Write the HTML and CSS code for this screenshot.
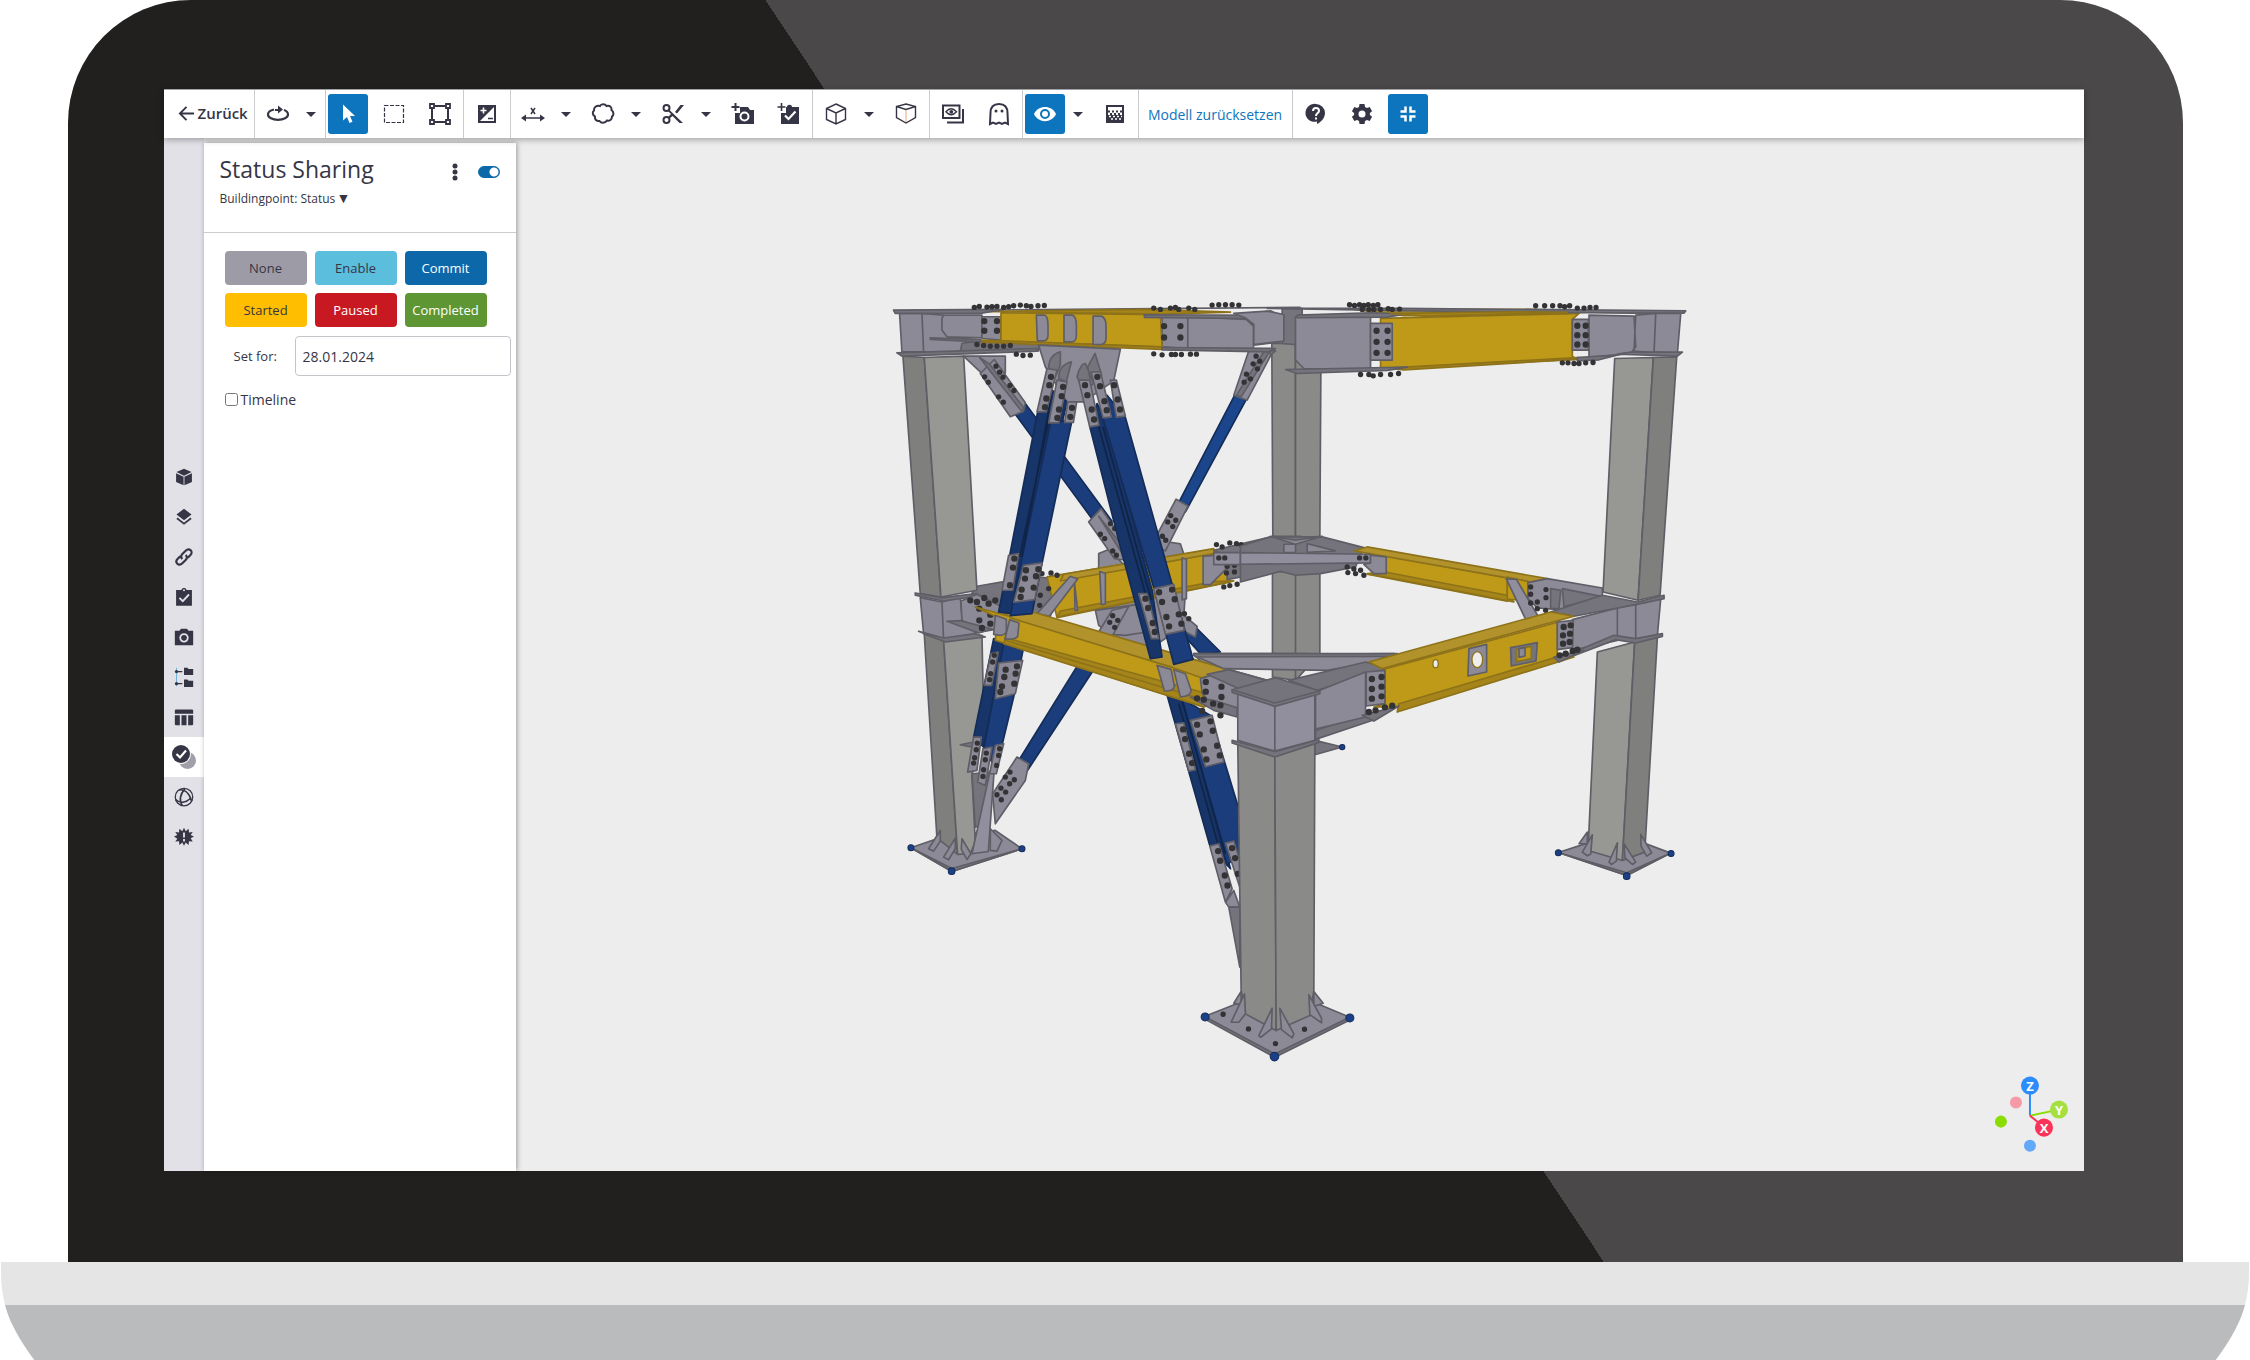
FILE: index.html
```html
<!DOCTYPE html>
<html lang="de">
<head>
    <meta charset="UTF-8">
    <meta name="viewport" content="width=device-width, initial-scale=1.0">
    <title>Status Sharing</title>
    <link rel="stylesheet" href="styles.css">
</head>
<body>
    <div class="lid">
        <div class="screen">
            <header class="toolbar">
                <div class="group">
                    <button class="back"><svg viewBox="0 0 18 18"><path class="line" d="M17 9H2M9 2L2 9l7 7"/></svg>Zurück</button>
                </div>
                <div class="group flush">
                    <button class="tool" aria-label="Orbit"><svg viewBox="0 0 24 24"><path d="M8 7.500C4 8.300 2 10 2 12.500c0 3.200 4.500 5.300 10 5.300s10-2.100 10-5.300c0-2-1.500-3.700-4-4.500M9 8h5" fill="none" stroke="#363545" stroke-width="2.200"/><path d="M12 3.500l5 4-5 4z"/></svg></button>
                    <button class="caret" aria-label="Orbit options"></button>
                </div>
                <div class="group">
                    <button class="tool active" aria-label="Select"><svg viewBox="0 0 24 24"><path d="M7 2.500v16l4-3.500 2.500 6 3-1.300L14 14h5z"/></svg></button>
                    <button class="tool" aria-label="Area"><svg viewBox="0 0 24 24"><path d="M2.500 3.500h19v17h-19z" fill="none" stroke="#363545" stroke-width="1.200" stroke-dasharray="4 1.500"/></svg></button>
                    <button class="tool" aria-label="Polygon"><svg viewBox="0 0 24 24"><path class="line" d="M4 4h16v16H4z"/><path d="M2 2h4v4H2zM18 2h4v4h-4zM2 18h4v4H2zM18 18h4v4h-4z" fill="#fff" stroke="#363545" stroke-width="1.800"/></svg></button>
                </div>
                <div class="group flush">
                    <button class="tool" aria-label="Contrast"><svg viewBox="0 0 24 24"><path d="M4 4h16v16H4z" fill="#fff" stroke="#363545" stroke-width="2"/><path d="M3 3h18L3 21z"/><path d="M8.500 5.500v6M5.500 8.500h6" stroke="#fff" stroke-width="1.600"/><path d="M13 16.500h5" stroke="#363545" stroke-width="1.500"/></svg></button>
                </div>
                <div class="group">
                    <button class="tool" aria-label="Measure"><svg viewBox="0 0 24 24"><path d="M4 16h16M10 6l4 6M14 6l-4 6" fill="none" stroke="#363545" stroke-width="1.500"/><path d="M0 16l5-3.500v7zM24 16l-5-3.500v7z"/></svg></button>
                    <button class="caret" aria-label="Measure options"></button>
                    <button class="tool" aria-label="Markup"><svg viewBox="0 0 24 24"><path class="line" d="M9 4c1-2.500 5-2.500 6.500 0 3-1 5.500 1 5 4 2.500 2 2.500 5 .500 6.500 0 3-2.500 5-5 4-2 3-6 3-7.500.500-3 .500-5-1.500-4.500-4.500C1.500 13 1 10 3 8.500 2.500 5.500 5.500 3 9 4z"/></svg></button>
                    <button class="caret" aria-label="Markup options"></button>
                    <button class="tool" aria-label="Cut"><svg viewBox="0 0 24 24"><path d="M8 7.500L22 21h-3.500L11.500 14 8 17l-1.500-1.500 3.500-3.500-3.500-3.500zM14 10l5.500-7H23l-7 8.500z"/><circle class="line" cx="5.500" cy="6" r="3"/><circle class="line" cx="5.500" cy="18" r="3"/></svg></button>
                    <button class="caret" aria-label="Cut options"></button>
                    <button class="tool" aria-label="Add view"><svg viewBox="0 0 24 24"><path d="M9 5h8l2 3h4v14H4V11h5z"/><path d="M4.500 1v8M.500 5h8" stroke="#363545" stroke-width="2"/><circle cx="13.500" cy="14.500" r="4" fill="none" stroke="#fff" stroke-width="2"/></svg></button>
                    <button class="tool" aria-label="Add task"><svg viewBox="0 0 24 24"><path d="M10 5c0-3 5-3 5 0h7v17H4v-11h5V5z"/><path d="M4.500 1v8M.500 5h8" stroke="#363545" stroke-width="1.600"/><path d="M8 13.500l3.500 3.500 7-7.500" fill="none" stroke="#fff" stroke-width="2.200"/></svg></button>
                </div>
                <div class="group">
                    <button class="tool" aria-label="View cube"><svg viewBox="0 0 24 24"><path class="thin" d="M12 2l9.500 4.500v11L12 22l-9.500-4.500v-11zM2.500 6.500L12 11l9.500-4.500M12 11v11"/></svg></button>
                    <button class="caret" aria-label="View options"></button>
                    <button class="tool" aria-label="Projection"><svg viewBox="0 0 24 24"><path class="thin" d="M12 2l9.500 2.500v11L12 21l-9.500-5.500v-11zM2.500 4.500L12 7.500l9.500-3"/><path d="M12 8v12" stroke="#e9a67c"/></svg></button>
                </div>
                <div class="group flush">
                    <button class="tool" aria-label="Views"><svg viewBox="0 0 24 24"><path class="line" d="M2 3.500h16.500V16H2zM22 7v13.500H6"/><path class="thin" d="M5 9.800q5-6 10.500 0q-5.500 6-10.500 0z"/><circle cx="10.300" cy="9.800" r="1.900"/></svg></button>
                    <button class="tool" aria-label="Ghost"><svg viewBox="0 0 24 24"><path class="line" d="M3 22l.500-11C3.500 5 7 2 12 2s8.500 3 8.500 9L21 22l-3-1.500-3 1.500-3-1.500L9 22l-3-1.500z"/><circle cx="9" cy="9" r="1.500"/><circle cx="15" cy="9" r="1.500"/></svg></button>
                </div>
                <div class="group">
                    <button class="tool active" aria-label="Visibility"><svg viewBox="0 0 24 24"><path d="M1 12C5 2.500 19 2.500 23 12 19 21.500 5 21.500 1 12z"/><circle cx="12" cy="12" r="4" fill="none" stroke="#0d75bd" stroke-width="2"/></svg></button>
                    <button class="caret" aria-label="Visibility options"></button>
                    <button class="tool" aria-label="Transparency"><svg viewBox="0 0 24 24"><path class="line" d="M4 4h16v16H4z"/><path d="M4 13h16v7H4z"/><path d="M5 9.500h14M7 12h12" stroke="#363545" stroke-width="2" stroke-dasharray="2 2"/><path d="M6 14.500h13M8 17h10" stroke="#fff" stroke-width="1.600" stroke-dasharray="2 2"/></svg></button>
                </div>
                <div class="group">
                    <button class="reset">Modell zurücksetzen</button>
                </div>
                <div class="group last">
                    <button class="tool" aria-label="Help"><svg viewBox="0 0 24 24"><path d="M12 2a9 9 0 0 1 9 9c0 5-4 9-8 11v-2.500A9 9 0 1 1 12 2z"/><path d="M9 9c0-4 6-4 6 0 0 2-3 2.300-3 5M12 15.500v2" fill="none" stroke="#fff" stroke-width="2"/></svg></button>
                    <button class="tool" aria-label="Settings"><svg viewBox="0 0 24 24"><path d="M9.500 2h5l.500 3 2 1 2.700-1 2.400 4.200-2.200 1.800v2l2.200 1.800-2.400 4.200-2.700-1-2 1-.500 3h-5L9 19l-2-1-2.700 1-2.400-4.200L4.100 13v-2L1.900 9.200 4.300 5 7 6l2-1z"/><circle cx="12" cy="12" r="3.500" fill="#fff"/></svg></button>
                    <button class="tool active" aria-label="Collapse"><svg viewBox="0 0 24 24"><path d="M4.500 9.500h5v-5M19.500 9.500h-5v-5M4.500 14.500h5v5M19.500 14.500h-5v5" fill="none" stroke="#fff" stroke-width="2.500"/></svg></button>
                </div>
            </header>

            <main class="workspace">
                <nav class="rail">
                    <a href="#models" aria-label="Models"><svg viewBox="0 0 24 24"><path d="M12 2l9 4-9 4.500L3 6zM2.500 7.500l9 4.200V22l-9-4zM21.500 7.500l-9 4.200V22l9-4z"/></svg></a>
                    <a href="#layers" aria-label="Layers"><svg viewBox="0 0 24 24"><path d="M12 2l9 7-9 7-9-7z"/><path class="line" d="M3.500 13.500L12 20l8.500-6.500"/></svg></a>
                    <a href="#links" aria-label="Links"><svg viewBox="0 0 24 24"><path d="M10 14.500c-2-2-2-4 0-6l4-4c2-2 4.500-2 6-.500s1.500 4-.500 6l-3 3M14 9.500c2 2 2 4 0 6l-4 4c-2 2-4.500 2-6 .500s-1.500-4 .500-6l3-3" fill="none" stroke="#363545" stroke-width="2.600"/></svg></a>
                    <a href="#tasks" aria-label="Tasks"><svg viewBox="0 0 24 24"><path d="M9 3.500c.500-3 5.500-3 6 0h6.500v19h-19v-19z"/><circle cx="12" cy="4" r="1.200" fill="#e1e1e7"/><path d="M6.500 13l4 4 7.500-8" fill="none" stroke="#e1e1e7" stroke-width="2.200"/></svg></a>
                    <a href="#views" aria-label="Views"><svg viewBox="0 0 24 24"><path d="M8.500 2h7l2 2.500H23V22H1V4.500h5.500z"/><circle cx="12" cy="13" r="4.500" fill="none" stroke="#e1e1e7" stroke-width="2.200"/></svg></a>
                    <a href="#tree" aria-label="Structure"><svg viewBox="0 0 24 24"><path d="M12 1h4l1.500 1.500H23V9.500H12zM12 15h4l1.500 1.500H23V24H12z"/><path d="M3 1v22" stroke="#5aa9dd"/><path d="M3 5.500h7M3 20h7" stroke="#363545" stroke-width="1.500"/><circle cx="3" cy="5.500" r="2"/><circle cx="3" cy="20" r="2"/></svg></a>
                    <a href="#data" aria-label="Data table"><svg viewBox="0 0 24 24"><path d="M2 3h20l1 1v4H1V4zM1 10h6v12H2l-1-1zM9 10h6v12H9zM17 10h6v11l-1 1h-5z"/></svg></a>
                    <a class="current" href="#status" aria-label="Status Sharing"><svg viewBox="0 0 24 24"><circle cx="15.500" cy="15.500" r="8.500" fill="#a1a0aa"/><circle cx="9" cy="9" r="10" fill="#fff"/><circle cx="9" cy="9" r="9"/><path d="M4.500 9l3.500 3.500 6-7" fill="none" stroke="#fff" stroke-width="2.200"/></svg></a>
                    <a href="#connect" aria-label="Connect"><svg viewBox="0 0 24 24"><g class="line"><circle cx="12" cy="12" r="10.500" stroke-width="1.500"/><path d="M6 3.500c6-1 12 3 15 13M10 22.500c-4-6-3-14 3-20M2 15c5 5 12 4 18.500-2"/></g></svg></a>
                    <a href="#issues" aria-label="Issues"><svg viewBox="0 0 24 24"><path d="M12 1l2 4 3.500-3 .500 4.500 4.500-.500-2.500 3.500 4 2-4 2 2.500 4-4.500-.500-.500 4.500-3.500-3-2 4-2-4-3.500 3-.500-4.500-4.500.500L4 14l-4-2.500 4-2L1.500 6l4.500.500L6.500 2 10 5z"/><path d="M12 6.500v6M12 14.500v3" stroke="#e1e1e7" stroke-width="2.200"/></svg></a>
                </nav>

                <section class="panel">
                    <div class="panel-head">
                        <div class="title-row">
                            <h1>Status Sharing</h1>
                            <button class="more" aria-label="More"><svg viewBox="0 0 6 18"><circle cx="3" cy="3" r="2.500"/><circle cx="3" cy="9" r="2.500"/><circle cx="3" cy="15" r="2.500"/></svg></button>
                            <input class="switch" type="checkbox" role="switch" aria-label="Status on" checked>
                        </div>
                        <div class="project">
                            <select aria-label="Project">
                                <option>Buildingpoint: Status</option>
                            </select>
                            <span class="arrow">▼</span>
                        </div>
                    </div>
                    <div class="statuses">
                        <button class="none">None</button>
                        <button class="enable">Enable</button>
                        <button class="commit">Commit</button>
                        <button class="started">Started</button>
                        <button class="paused">Paused</button>
                        <button class="completed">Completed</button>
                    </div>
                    <div class="date-row">
                        <label for="date">Set for:</label>
                        <input id="date" type="text" value="28.01.2024">
                    </div>
                    <div class="timeline">
                        <input id="timeline" type="checkbox">
                        <label for="timeline">Timeline</label>
                    </div>
                </section>

                <section class="viewer">
                    <svg class="model" viewBox="516 138 1567 1032" role="img" aria-label="Steel frame model">
                        <!-- rear column -->
                        <g transform="translate(1240 280) scale(.333333)">
                            <path class="c2" d="M94 190h71v585l-68-7z"/>
                            <path class="c2" d="M165 190l76 90-3 488-73 7z"/>
                        </g>
                        <g transform="translate(1180 560) scale(.333333)">
                            <path class="c2" d="M276 30h69v330l-69-10zM345 30h73v250l-73 80z"/>
                        </g>

                        <!-- rear ring beams -->
                        <g transform="translate(880 280) scale(.333333)">
                            <path class="p1" d="M655 1000V820l30-12 50 50 135-72 30 5 20 60-10 160-20 40-60 40-140 20z"/>
                            <path class="p2" d="M290 918l170-30 80 10-30 110-120 30-150-50z"/>
                            <path class="y1" d="M500 890l500-82 50 97-520 107z"/>
                            <path class="y3" d="M550 882l450-77v15l-460 82z"/>
                            <path class="y2" d="M540 992l460-88 60-2-530 108z"/>
                            <path class="p1" d="M582 905l10 85h-8zM658 874l17 5v92l-12 2zM905 833l13 4v118l-13 4z"/>
                            <path class="p1" d="M470 1000l100-112 22 8-85 112z"/>
                            <path class="p2" d="M1000 810l180-42h80v110l-90-5-130 25v-70z"/>
                            <path class="p1" d="M968 828l72-5v40l-50 50h-22z"/>
                            <path class="bolt" d="M485 880h0M512 878h0M530 885h0M505 925h0M480 945h0M478 975h0M1040 858h0M1062 855h0M1038 878h0M1062 875h0M1008 793h0M1025 800h0M1048 788h0M1068 790h0M1082 793h0M1030 920h0M1048 916h0M1070 912h0"/>
                            <path class="p3" d="M1000 817h270v36h-270z"/>
                            <path class="bolt" d="M1015 833h0M1033 833h0"/>
                        </g>
                        <g transform="translate(1240 280) scale(.333333)">
                            <path class="p2" d="M0 797l90-27h155l125 32-25 58-105 20-75 5-45-12L0 905z"/>
                            <path class="p1" d="M90 768l75 12 80-12-80 24zM130 792h35v25h-35zM200 790l85 22-85 4z"/>
                            <path class="y1" d="M437 825l363 68v70L380 882l57-10z"/>
                            <path class="y3" d="M340 812l40-12 540 95-50 10z"/>
                            <path class="y2" d="M380 880l57-4 363 69 20 20z"/>
                            <path class="y1" d="M800 890l62 14v58l-62-6z"/>
                            <path class="p1" d="M862 907l58-12 165 28v27l-125 38-70-5-28-28z"/>
                            <path class="p2" d="M930 925l30 5-5 55h-25zM965 925l120 24-115 30z"/>
                            <path class="p3" d="M0 817l390 5v26L0 852z"/>
                            <path class="p1" d="M390 825l47 5v50h-37l-30-28 20-4z"/>
                            <path class="p3" d="M797 896l30 1 65 110-37 10z"/>
                            <path class="bolt" d="M357 833h0M376 833h0M320 860h0M340 866h0M360 870h0M322 877h0M345 880h0M370 885h0M870 920h0M916 928h0M870 942h0M916 952h0M870 968h0M890 965h0M890 985h0M915 990h0"/>
                        </g>

                        <!-- side columns -->
                        <g transform="translate(880 280) scale(.333333)">
                            <path class="c1" d="M68 228l64 4 50 718-62-10z"/>
                            <path class="c3" d="M132 232l118-4 40 702-108 20z"/>
                        </g>
                        <g transform="translate(1240 280) scale(.333333)">
                            <path class="c3" d="M1122 235l116-3-46 728-105-25z"/>
                            <path class="c1" d="M1238 232l70-2-50 715-66 15z"/>
                        </g>

                        <!-- upper frame, thin braces -->
                        <g transform="translate(880 280) scale(.333333)">
                            <path class="p2" d="M240 185h235v27H240zM1205 85h60v110l-60-5z"/>
                            <path class="p1" d="M250 228h125v50l-30 40zM1100 212h85l-30 25z"/>
                            <path class="b1" d="M385 375l45-12 265 360-40 20z"/>
                            <path class="b3" d="M1080 312l26 30-191 353-32-5z"/>
                            <path class="p1" d="M300 280l42-42 93 130-5 25-40 17z"/>
                            <path class="p2" d="M298 232l30 20 102 130-5 13z"/>
                            <path class="p1" d="M625 725l37-40 80 115-5 40-35-5z"/>
                            <path class="p2" d="M655 708l90 112-12 12z"/>
                            <path class="p1" d="M1105 212l65-5v20l-70 133-40-15z"/>
                            <path class="p2" d="M1150 215l20-5-88 140-14-5z"/>
                            <path class="p1" d="M887 657l36 20-68 135-22-12v-42z"/>
                            <path class="bolt" d="M347 258h0M358 276h0M368 291h0M313 290h0M324 306h0M389 316h0M401 331h0M355 350h0M369 366h0M690 730h0M703 745h0M716 757h0M660 762h0M673 775h0M697 812h0M708 825h0M1127 228h0M1138 243h0M1118 251h0M1131 266h0M1098 282h0M1110 296h0M1091 306h0M871 706h0M886 720h0M862 725h0M877 739h0M846 768h0M856 780h0"/>

                            <path class="p1" d="M58 100h67l5 115H65zM125 100l65 5v50l15 15 95 10-55 10-5 25H130z"/>
                            <path class="p1" d="M190 105h115v68l-105-3-15-20V115z"/>
                            <path class="p1" d="M305 110h57v70l-57-5zM845 108h77v97l-77-5zM922 110l175 8 22 20v72l-197-8zM1095 105l75-13 35 18v75l-85 10v-60z"/>
                            <path class="y1" d="M362 98l478 6 5 97-483-18z"/>
                            <path class="line" d="M40 92l1220-10"/>
                            <path class="y2" d="M300 94l500-6 250 8-200 6z"/>
                            <path class="y2" d="M300 180l545 20v8l-545-22z"/>
                            <path class="p2" d="M40 90l330-2-70 12H45zM792 104l370 2v10l-370-4zM845 202l340 3-20 10-320-6zM50 218l420-13v8L65 228zM150 173l150 5v7l-150-7z"/>
                            <path class="p1" d="M468 105h25q10 5 10 30v30q0 15-12 17h-20zM551 105h25q12 5 12 30v30q0 18-12 20h-25zM638 108h25q14 5 14 30v35q0 18-14 20h-25z"/>
                            <path class="bolt big" d="M851 138h0M900 138h0M851 172h0M900 172h0M312 123h0M350 123h0M312 152h0M350 152h0"/>
                            <path class="bolt" d="M282 82h0M297 79h0M320 81h0M335 80h0M350 79h0M370 82h0M385 80h0M400 77h0M420 75h0M438 77h0M452 79h0M473 77h0M492 76h0M820 84h0M840 88h0M870 84h0M885 82h0M895 88h0M925 84h0M943 88h0M995 75h0M1015 74h0M1035 74h0M1055 74h0M1075 75h0M290 193h0M310 196h0M330 198h0M350 198h0M370 198h0M390 196h0M408 222h0M428 226h0M450 225h0M820 221h0M845 224h0M873 223h0M885 223h0M903 223h0M930 222h0M948 222h0"/>

                            <path class="p1" d="M475 195l245 12-20 95-90 63h-50l-65-105z"/>
                            <path class="p2" d="M505 265q0-40 35-50v40l-15 35zM535 295q0-40 38-50l-15 60zM590 290q10-40 25-40l25 60-30 20zM622 260l22-40 20 65-35 10z"/>
                        </g>

                        <!-- upper right beam -->
                        <g transform="translate(1240 280) scale(.333333)">
                            <path class="p1" d="M-20 100l100-7 50 10v80l-90 10v-60l-25-20zM165 110h225v158l-200-3-25-25z"/>
                            <path class="p1" d="M1045 105l135 3 5 92-15 20-125 12zM1185 105l60-5-5 118-60-5zM1245 100h75l-10 120-70-5z"/>
                            <path class="y1" d="M420 115l595-15-20 18v110l15 10-590 27z"/>
                            <path class="y3" d="M340 88h530l200 6-100 7-480 6z"/>
                            <path class="y2" d="M440 264l570-32 50 2-570 35z"/>
                            <path class="p2" d="M80 85h400l855 7-5 7h-160L480 92zM170 105l220-7 110 3-60 10-270 2zM135 268l300-6 65-1-60 10-270 9zM1010 232l125-8-60 15-65 3zM1130 222l40-6h155l-15 12z"/>
                            <path class="y2" d="M450 100l380-5 150 2-430 11z"/>
                            <path class="p1" d="M390 130h65v110h-65zM995 118h48v92h-48z"/>
                            <path class="bolt big" d="M408 152h0M441 152h0M408 185h0M441 185h0M408 218h0M441 218h0M1010 137h0M1035 137h0M1010 165h0M1035 165h0M1010 193h0M1035 193h0"/>
                            <path class="bolt" d="M327 74h0M342 76h0M357 74h0M370 76h0M383 74h0M398 76h0M412 74h0M365 88h0M385 88h0M400 88h0M420 88h0M443 86h0M455 88h0M477 87h0M885 77h0M912 77h0M936 77h0M958 77h0M972 80h0M987 77h0M1010 84h0M1030 84h0M1048 82h0M1066 82h0M360 283h0M385 283h0M398 287h0M420 283h0M450 283h0M474 280h0M965 248h0M982 248h0M1000 250h0M1015 250h0M1035 248h0M1057 247h0"/>
                        </g>

                        <!-- lower left: column, braces -->
                        <g transform="translate(880 560) scale(.333333)">
                            <path class="p1" d="M645 150l145-20 10 85-65 10-45-3-35-27z"/>
                            <path class="b1" d="M595 310l45 18-205 312-32-20z"/>
                            <path class="b1" d="M910 225l35-25 75 75-60 5z"/>
                            <path class="p1" d="M655 215l40-65 50-12-50 90zM890 148l60 50-5 32-40-20z"/>
                            <path class="bolt" d="M697 166h0M712 180h0M688 186h0M703 201h0M912 160h0M925 175h0"/>
                            <path class="p1" d="M92 862l78-27 175-25 80 55-210 68z"/>
                            <path class="p2" d="M92 862l123 62 210-59-210 68z"/>
                            <path class="c1" d="M132 222l58 18 42 642-62-50z"/>
                            <path class="c3" d="M190 240l115-15 5 240-35 180 10 200-15 35-38 2z"/>
                            <path class="p1" d="M120 112l65 13 5 112-60-17zM185 125l55-15 5 60 60 30-35 28-80 10z"/>
                            <path class="p2" d="M105 98l80 14 105-12v8l-100 14-85-17zM115 213l75 20 95-13 30 10-120 15z"/>
                            <path class="p1" d="M242 122l48-20 70 35-15 70-45 8-55-35z"/>
                            <path class="p2" d="M200 183l40-2 95 25-40 12z"/>
                            <path class="bolt big" d="M270 120h0M290 125h0M312 113h0M325 130h0M345 120h0M297 145h0M330 163h0M297 180h0M330 190h0M305 203h0"/>
                            <path class="p2" d="M240 553l40-8v16zM275 640l55-5-30 160-15 5z"/>
                            <path class="p1" d="M145 865l35-55v32l-20 30zM190 890l35-57v32l-20 33zM245 835l27 45-12 17-17-30z"/>
                            <path class="p3" d="M275 880l55-250 12-5-18 248z"/>
                            <path class="p1" d="M330 870v-65l35 35-15 32z"/>

                            <path class="b2" d="M340 235l35 10-65 315-30-30z"/>
                            <path class="b1" d="M370 250l60 10-30 150-35 145-30 50-25-40z"/>
                            <path class="p1" d="M355 308l72-8-22 100-60 15zM332 280l22-5-20 100h-22zM280 530h23l-13 100-28 5zM308 565l27-5-20 115-23-10zM345 555l25-5-22 90h-20z"/>
                            <path class="p1" d="M345 688l65-98 35 20-10 50-90 130-8-90z"/>
                            <path class="bolt" d="M342 285h0M337 305h0M331 340h0M328 358h0M291 548h0M288 568h0M283 592h0M280 608h0M318 578h0M315 598h0M310 628h0M308 648h0M358 565h0M355 585h0M349 615h0M389 635h0M402 658h0M375 650h0M388 670h0M362 683h0M376 695h0M350 703h0M363 718h0"/>
                            <path class="bolt big" d="M376 328h0M410 318h0M372 350h0M406 340h0M365 378h0M402 370h0M360 395h0"/>

                            <path class="b2" d="M860 405l45 10 145 510-62-70z"/>
                            <path class="b1" d="M905 415l85 50 88 290v120l-38 40z"/>
                            <path class="dark" d="M905 420l130 460M895 430l120 430"/>
                            <path class="p1" d="M930 480l65-15 35 140-55 14zM885 490l25-3 35 141-20 4zM988 857l27-7 40 135-20 40zM1035 848l25-6 18 58v80zM1035 1025l25-35 18 50h-33z"/>
                            <path class="p2" d="M1045 1040h33v180z"/>
                            <path class="bolt big" d="M950 493h0M990 483h0M958 522h0M997 511h0M970 567h0M1010 556h0M978 597h0M1018 585h0M908 507h0M914 536h0M926 580h0M935 608h0M1013 872h0M1019 901h0M1033 945h0M1041 975h0M1055 863h0M1064 893h0M1072 940h0"/>
                            <path class="p1" d="M940 280h340v45h-300z"/>
                        </g>

                        <!-- front left beam -->
                        <g transform="translate(880 560) scale(.333333)">
                            <path class="y1" d="M285 140l110 30 575 180v90L345 240l5-70z"/>
                            <path class="y3" d="M360 148l100 8 360 106 225 66-82 24-85-30-483-148z"/>
                            <path class="y2" d="M375 232l595 165 40 25-40 18-600-190z"/>
                            <path class="edge" d="M375 240l590 176"/>
                            <path class="p1" d="M345 165l33 12v38q-5 10-18 10l-20-3zM388 178l28 10-4 40q-5 10-38 8zM830 315l42 12 10 50q0 15-30 15zM880 328l35 12 17 50q0 18-32 20z"/>
                            <path class="p1" d="M960 355l85-27 115 32-85 25-5 80-72-22-33-45z"/>
                            <path class="p2" d="M980 342l65-14 115 32-85 25z"/>
                            <path class="p2" d="M930 410l70 10 70 22v28l-70-20z"/>
                            <path class="bolt big" d="M976 365h0M1023 379h0M976 394h0M1023 410h0M950 414h0M970 418h0M998 430h0M1020 435h0M965 452h0M1020 465h0"/>
                        </g>

                        <!-- main braces, upper part -->
                        <g transform="translate(880 280) scale(.333333)">
                            <path class="b2" d="M472 395l43-65 45 35-110 485-55 150-40-5z"/>
                            <path class="b1" d="M512 420l62 5-89 425-30 150-65 6 30-150z"/>
                            <path class="dark" d="M515 335L425 830M505 420L418 830"/>
                            <path class="p1" d="M500 265l30 5-32 125h-28zM530 300l30 5-25 123h-30zM562 365h27l-10 62h-26zM385 825l30-5-18 110h-32zM430 855l55-7-22 110-63 8z"/>
                            <path class="b2" d="M628 438l22-68 25 45 140 515 30 200-35 5-85-315z"/>
                            <path class="b1" d="M668 415l12-70 55 67 140 500 63 225-58 15-60-230z"/>
                            <path class="dark" d="M668 440l145 520M655 440l140 500"/>
                            <path class="p1" d="M595 300h33l28 135-28 5zM632 275h28l33 135-25 3zM690 300h18l27 108-27 3zM820 925l60-13 32 138-57 12zM775 940h25l35 135h-22z"/>
                            <path class="bolt big" d="M512 290h0M507 315h0M498 355h0M494 381h0M548 320h0M544 348h0M536 388h0M531 413h0M575 383h0M570 410h0M614 315h0M621 345h0M634 388h0M641 418h0M651 290h0M659 318h0M672 363h0M679 390h0M701 315h0M712 358h0M719 388h0M402 835h0M398 862h0M389 915h0M437 870h0M474 867h0M434 895h0M467 888h0M460 922h0M424 928h0M421 950h0M836 936h0M875 928h0M845 965h0M883 957h0M858 1010h0M895 1002h0M866 1038h0M903 1030h0M795 955h0M803 983h0M817 1028h0M823 1055h0"/>
                        </g>

                        <!-- front right beam, right column -->
                        <g transform="translate(1180 560) scale(.333333)">
                            <path class="p1" d="M40 285l600-5-80 30-120 20-310-5z"/>
                            <path class="p2" d="M40 280h610l-15 8-590 2z"/>
                            <path class="p1" d="M1133 876l87-28h170l80 30-132 67z"/>
                            <path class="p2" d="M1133 876l205 61 132-59-132 67z"/>
                            <path class="p1" d="M1195 850l25-35v35z"/>
                            <path class="c3" d="M1250 275l112-30-37 655-103-30z"/>
                            <path class="c1" d="M1362 245l68-15-38 645-67 25z"/>
                            <path class="p1" d="M1205 875l30-52-5 58-10 5zM1285 905l25-58-3 55-15 10zM1330 850l35 55-10 7-22-20zM1380 822l33 55-15 10-17-30z"/>
                            <path class="p1" d="M1175 178l135-35v97l-135 30zM1310 143l55-13v110l-55-10zM1365 130l75-15-10 110-65 13z"/>
                            <path class="p2" d="M1110 155l155-50 105 20 80-20v10l-85 18-185 35zM1180 275l120-50 65 10 80-15v8l-80 20-60-10-130 50z"/>
                            <path class="p2" d="M325 360l230-55 70 20-215 65zM405 510l155-50 30 15-185 62z"/>
                            <path class="p1" d="M405 395l150-60v135l-150 36z"/>
                            <path class="y1" d="M613 326l517-140v104l-480 150h-70l33-10z"/>
                            <path class="y3" d="M565 305l545-150 70 13-575 157z"/>
                            <path class="y2" d="M655 430l475-140 50 0-530 165z"/>
                            <path class="p1" d="M557 335l56-5v100l-56 7zM1130 185l48-5-3 82-45 6z"/>
                            <path class="p2" d="M545 465l110-28-75 45zM1120 290l90-20-75 35z"/>
                            <ellipse class="hole" cx="765" cy="310" rx="8" ry="12"/>
                            <path class="p1" d="M865 265l53-13v83l-56 12z"/>
                            <ellipse class="hole" cx="890" cy="298" rx="16" ry="24"/>
                            <path class="p2" d="M990 262l80-15-4 55-74 15z"/>
                            <path class="y1" d="M1008 267l44-9v37l-44 9z"/>
                            <path class="p1" d="M1015 265l18-3v25l-18 4z"/>
                            <path class="bolt big" d="M574 356h0M603 350h0M574 386h0M603 379h0M574 415h0M603 408h0M565 455h0M585 450h0M613 441h0M635 436h0M1149 200h0M1170 195h0M1147 225h0M1168 220h0M1147 250h0M1167 245h0M1137 285h0M1155 280h0M1176 272h0M1190 268h0"/>
                        </g>

                        <!-- front column -->
                        <g transform="translate(1180 560) scale(.333333)">
                            <path class="p2" d="M403 540l82 20-82 23z"/>
                            <path class="p1" d="M72 1368l108-43h220l108 45-225 113z"/>
                            <path class="p2" d="M72 1368l211 112 225-110v8l-225 112-211-115z"/>
                            <path class="p1" d="M160 1328l22-35v40zM400 1293l28 35-28 10z"/>
                            <path class="c2" d="M172 550l111 35 4 825-92-50-13-70z"/>
                            <path class="c2" d="M283 585l120-35-3 740-12 75-101 45z"/>
                            <path class="p3" d="M172 400l111 35v137l-111-32zM283 435l120-37v142l-120 32z"/>
                            <path class="p2" d="M155 388l130-36 133 40-135 38z"/>
                            <path class="p2" d="M155 388l128 40 135-36v8l-135 38-128-42zM155 540l128 34 132-36v8l-132 44-128-42z"/>
                            <path class="p1" d="M152 1385l40-85 3 60-20 25zM385 1303l38 70v14l-35-25zM235 1425l40-82-2 62-32 25zM298 1343l42 77-5 12-32-25z"/>
                            <path class="bolt" d="M128 1361h0M204 1405h0M285 1449h0M372 1406h0"/>
                            <g class="node">
                                <circle cx="74" cy="1369" r="12"/><circle cx="282" cy="1488" r="13"/><circle cx="508" cy="1372" r="12"/>
                                <circle cx="485" cy="560" r="8"/><circle cx="1133" cy="877" r="9"/><circle cx="1471" cy="879" r="9"/><circle cx="1338" cy="947" r="10"/>
                                <circle cx="-808" cy="862" r="9"/><circle cx="-686" cy="932" r="10"/><circle cx="-475" cy="865" r="9"/>
                            </g>
                        </g>

                        <!-- axis gizmo -->
                        <g class="axes">
                            <path d="M2029 1115V1085"/>
                            <path d="M2029 1115l24-5"/>
                            <path d="M2029 1115l12 10"/>
                            <circle cx="2015" cy="1102" r="6" fill="#f59aa6"/>
                            <circle cx="2000" cy="1121" r="6" fill="#8bdc00"/>
                            <circle cx="2029" cy="1145" r="6" fill="#62a8f8"/>
                            <circle cx="2029" cy="1085" r="9" fill="#2c8cfb"/>
                            <circle cx="2058" cy="1109" r="9" fill="#a6e040"/>
                            <circle cx="2043" cy="1127" r="9" fill="#fb3358"/>
                            <text x="2029" y="1090">Z</text>
                            <text x="2058" y="1114">Y</text>
                            <text x="2043" y="1132">X</text>
                        </g>
                    </svg>
                </section>
            </main>
        </div>
    </div>
    <svg class="base" viewBox="0 0 2250 99" preserveAspectRatio="none" aria-hidden="true">
        <path d="M1 0h2248v12q0 15-4 31H5q-4-16-4-31z" fill="#e5e5e5"/>
        <path d="M5 43h2240q-6 24-30 56H35Q11 67 5 43z" fill="#babbbd"/>
    </svg>
</body>
</html>
```

FILE: styles.css
```css
* {
    box-sizing: border-box;
}

body {
    margin: 0;
    min-height: 100vh;
    display: flex;
    flex-direction: column;
    background-color: #fff;
    font-family: "Open Sans", "Noto Sans", sans-serif;
    font-size: 14px;
    color: #363545;
}

button,
input,
select {
    font-family: inherit;
    color: inherit;
}

button {
    border: none;
    padding: 0;
    background: none;
    cursor: pointer;
}

svg {
    display: block;
    fill: #363545;
}

.line,
.thin {
    fill: none;
    stroke: #363545;
    stroke-width: 2;
}

.thin {
    stroke-width: 1.4;
}

/* laptop */
.lid {
    flex: 1;
    display: flex;
    margin: 0 3%;
    padding: 89px 99px 91px 96px;
    border-radius: 123px 123px 0 0;
    background: linear-gradient(56.4deg, #21201e 52%, #4a4849 52%);
}

.base {
    width: 100%;
    height: 99px;
}

.screen {
    flex: 1;
    min-width: 0;
    display: flex;
    flex-direction: column;
    background-color: #ededed;
}

/* toolbar */
.toolbar {
    position: relative;
    display: flex;
    height: 49px;
    background-color: #fff;
    border-top: 1px solid #a3a2a6;
    box-shadow: 0 2px 6px rgba(0, 0, 0, 0.3);
}

.group {
    display: flex;
    align-items: center;
    border-right: 1px solid #cbcbd0;
}

.group.flush {
    border-right: none;
    box-shadow: 1px 0 0 #cbcbd0;
}

.group.last {
    border-right: none;
}

.back {
    display: flex;
    align-items: center;
    gap: 3px;
    width: 90px;
    padding: 0 0 2px 14px;
    font-size: 15px;
    font-weight: 600;
}

.back svg {
    width: 17px;
    height: 17px;
}

.tool {
    display: grid;
    place-items: center;
    width: 40px;
    height: 40px;
    margin: 0 3px;
    border-radius: 3px;
}

.tool svg {
    width: 24px;
    height: 24px;
}

.active {
    background-color: #0d75bd;
}

.active svg {
    fill: #fff;
}

.caret {
    width: 24px;
    height: 40px;
    padding-left: 5px;
}

.caret::before {
    content: "";
    display: block;
    width: 0;
    border: 5px solid transparent;
    border-top-color: #363545;
    border-bottom: none;
}

.reset {
    width: 153px;
    color: #0d75bd;
    font-size: 14px;
    font-weight: 500;
}

/* side rail */
.workspace {
    flex: 1;
    display: flex;
    padding-top: 5px;
}

.rail {
    display: flex;
    flex-direction: column;
    justify-content: center;
    width: 40px;
    margin-top: -5px;
    padding-top: 5px;
    background-color: #e1e1e7;
}

.rail a {
    display: grid;
    place-items: center;
    height: 40px;
}

.rail svg {
    width: 20px;
    height: 20px;
}

.rail .current {
    background-color: #fff;
}

.rail .current svg {
    width: 24px;
    height: 24px;
}

/* panel */
.panel {
    width: 312px;
    background-color: #fff;
    box-shadow: 1px 0 5px rgba(0, 0, 0, 0.35);
}

.panel-head {
    height: 90px;
    padding: 9px 16px 0;
    border-bottom: 1px solid #cbcbd0;
}

.title-row {
    display: flex;
    align-items: center;
}

h1 {
    flex: 1;
    margin: 0;
    font-size: 23px;
    line-height: 34px;
    font-weight: 500;
}

.more svg {
    width: 6px;
    height: 18px;
}

.more {
    margin: 6px 20px 0 0;
}

.switch {
    appearance: none;
    width: 22px;
    height: 12px;
    margin: 6px 0 0;
    border: 1px solid #0b69a9;
    border-radius: 6px;
    background: radial-gradient(circle at 15px 5px, #fff 4px, #0b69a9 5px);
}

.project {
    display: flex;
    align-items: center;
    gap: 1px;
    height: 24px;
}

.project select {
    appearance: none;
    border: none;
    padding: 0;
    background: none;
    font-size: 12px;
    font-weight: 500;
}

.arrow {
    font-size: 14px;
    line-height: 20px;
}

.statuses {
    display: grid;
    grid-template-columns: repeat(3, 82px);
    gap: 8px;
    padding: 18px 21px 9px;
}

.statuses button {
    height: 34px;
    border-radius: 4px;
    font-size: 13px;
    font-weight: 500;
}

.none {
    background-color: #9d9ca6;
}

.enable {
    background-color: #5bbedd;
}

.statuses .commit {
    background-color: #0c68a9;
    color: #fff;
}

.started {
    background-color: #ffbe00;
}

.statuses .paused {
    background-color: #c81922;
    color: #fff;
}

.statuses .completed {
    background-color: #5d9632;
    color: #fff;
}

.date-row {
    display: flex;
    align-items: center;
    padding: 0 5px 0 30px;
    font-size: 13px;
}

.date-row label {
    width: 61px;
}

.date-row input {
    flex: 1;
    min-width: 0;
    height: 40px;
    padding: 0 7px;
    border: 1px solid #c4c4ca;
    border-radius: 4px;
    background-color: #fff;
    font-size: 14px;
}

.timeline {
    display: flex;
    align-items: center;
    gap: 3px;
    padding: 14px 21px;
    font-size: 14px;
}

.timeline input {
    width: 13px;
    height: 13px;
    margin: 0;
}

/* model viewer */
.viewer {
    flex: 1;
    min-width: 0;
    margin-top: -5px;
}

.model {
    width: 100%;
}

.model path {
    stroke: #5f5e66;
    stroke-width: 5;
    stroke-linejoin: round;
}

.c1 { fill: #7f7f7d; }
.c2 { fill: #8a8a88; }
.c3 { fill: #979794; }
.p1 { fill: #8c8a97; }
.p2 { fill: #75747d; }
.p3 { fill: #918f9e; }

.model .y1,
.model .y2,
.model .y3 {
    stroke: #8d7219;
}

.y1 { fill: #bf9a18; }
.y2 { fill: #a5841a; }
.y3 { fill: #b2932b; }

.model .b1,
.model .b2,
.model .b3 {
    stroke: #142c57;
}

.b1 { fill: #1b3d7b; }
.b2 { fill: #173569; }
.b3 { fill: #1c468c; }

.model .edge {
    fill: none;
    stroke: #8d7219;
}

.model .dark {
    fill: none;
    stroke: #0f2448;
}

.model .bolt {
    stroke: #333336;
    stroke-width: 16;
    stroke-linecap: round;
}

.model .big {
    stroke-width: 19;
}

.hole {
    fill: #ededed;
    stroke: #8d7219;
    stroke-width: 4;
}

.node {
    fill: #1b4088;
    stroke: #142c57;
    stroke-width: 3;
}

.model .axes path {
    fill: none;
    stroke-width: 2;
}

.model .axes path:nth-child(1) { stroke: #2c8cfb; }
.model .axes path:nth-child(2) { stroke: #8bdc00; }
.model .axes path:nth-child(3) { stroke: #fb3358; }

.axes text {
    fill: #fff;
    font-size: 13px;
    font-weight: 700;
    text-anchor: middle;
}
```
